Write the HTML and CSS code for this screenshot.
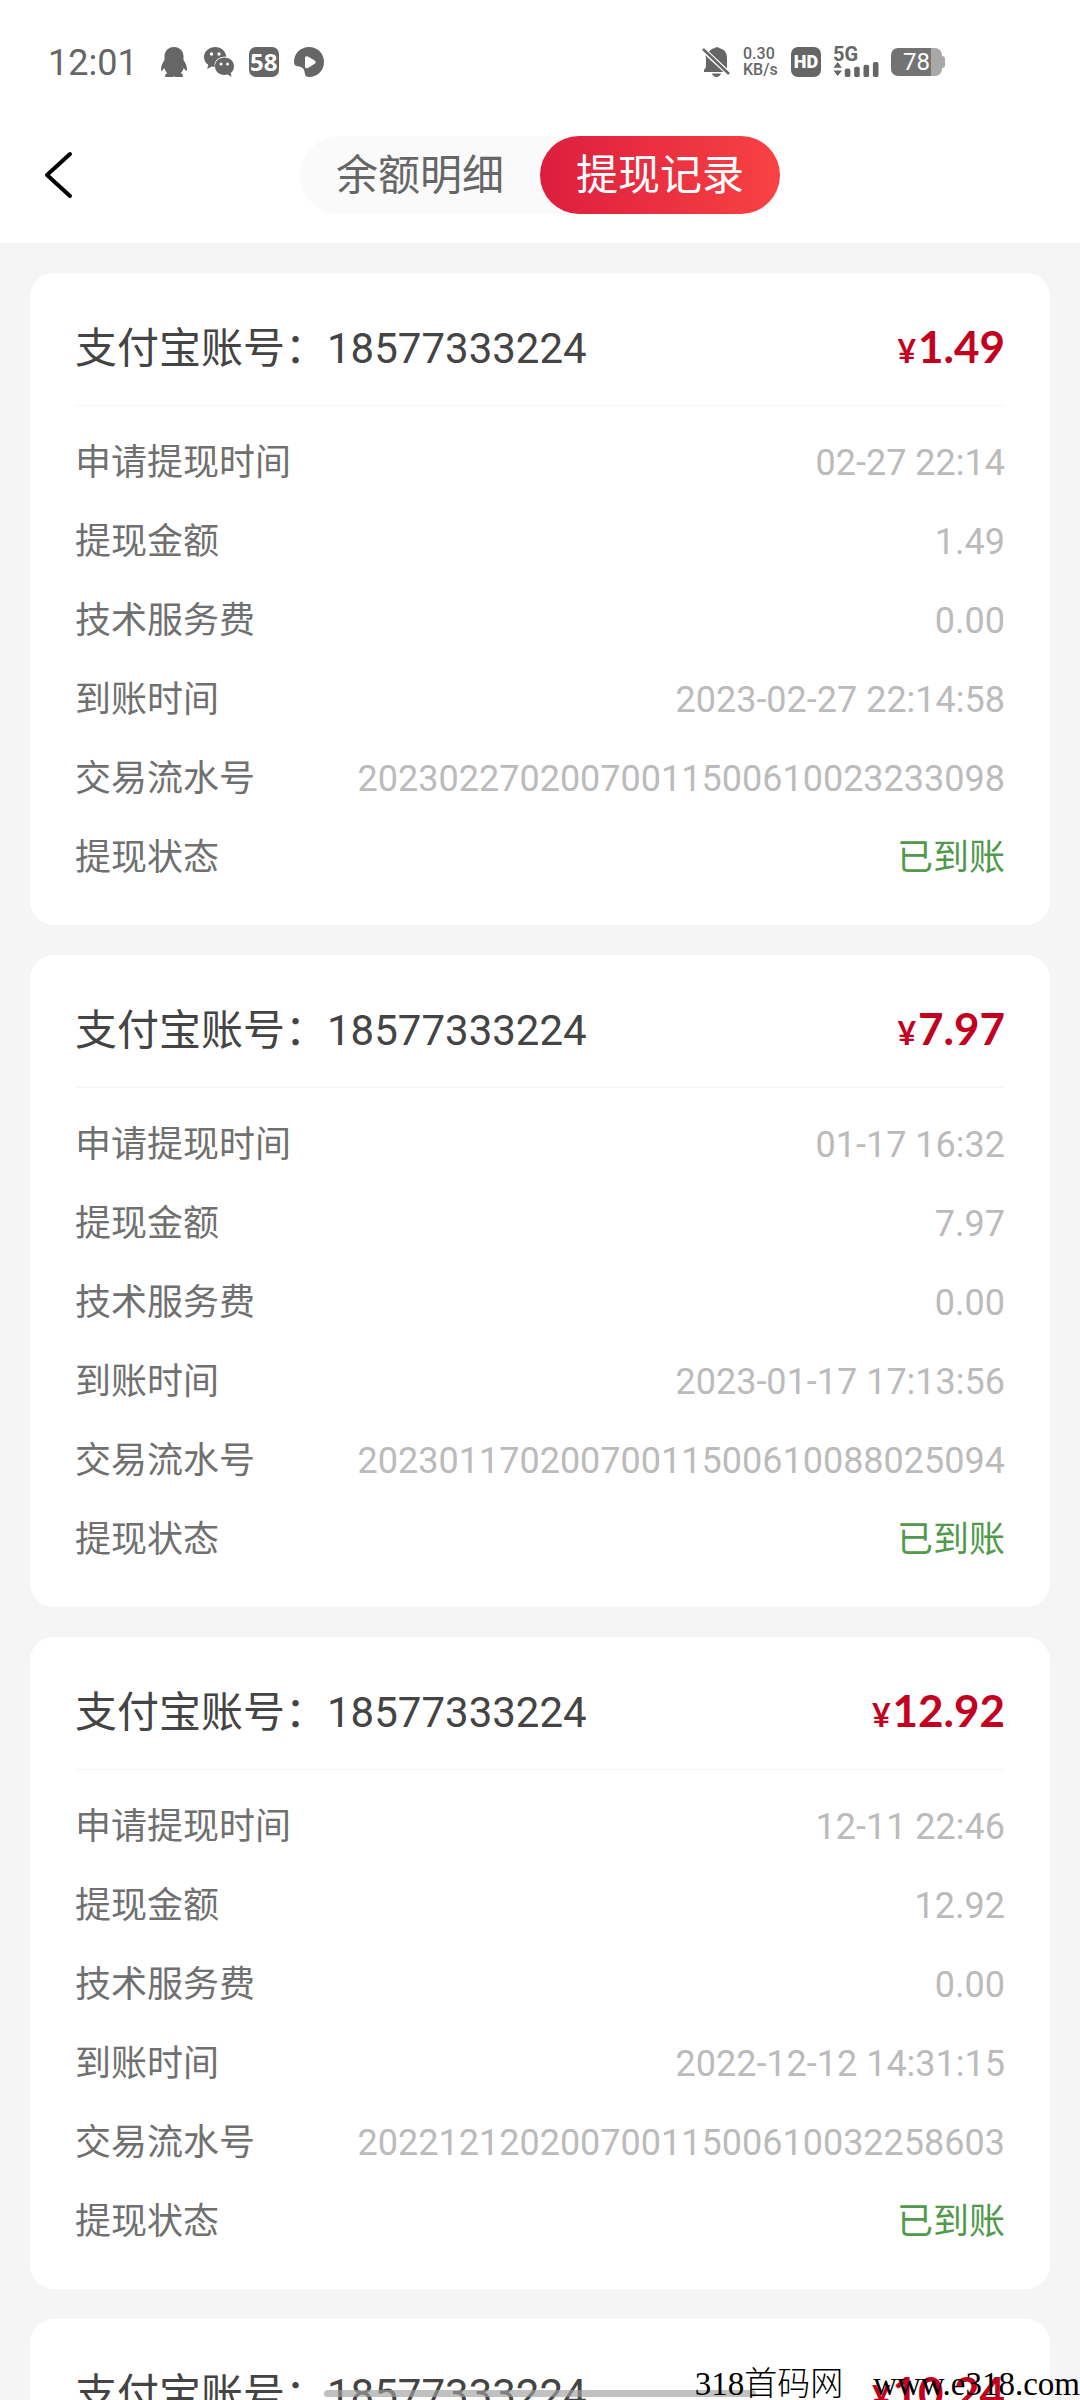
FILE: index.html
```html
<!DOCTYPE html>
<html lang="zh-CN">
<head>
  <meta charset="UTF-8">
  <meta name="viewport" content="width=device-width, initial-scale=1.0">
  <title>提现记录</title>
  <link rel="stylesheet" href="styles.css">
</head>
<body>
  <div class="status-bar">
    <div class="status-left">
      <span class="time">12:01</span>
      <svg class="icon" viewBox="0 0 30 30" aria-hidden="true">
        <path d="M15 0C9 0 5.500 4.300 5.500 9.500V13C3.500 16 1.800 19.500 2 23c.1 1.400 1 1.200 3.300-2 .5 2.200 1.500 3.800 3 5C6.500 26.800 5.800 28 6.300 30H14l1-.8 1 .8h7.700c.5-2-.2-3.200-2-4 1.500-1.200 2.500-2.800 3-5 2.300 3.200 3.200 3.400 3.300 2 .2-3.500-1.500-7-3.500-10V9.500C24.500 4.300 21 0 15 0z"/>
      </svg>
      <svg class="icon" viewBox="0 0 30 30" aria-hidden="true">
        <path d="M11.500 0C5 0 0 4.500 0 10c0 3.200 1.500 6 4.200 7.800L3.200 22l4.600-2.400c1 .3 2 .4 3 .4C9.500 13.500 14.500 9.300 22.400 9.400 21.500 4 17 0 11.500 0z"/>
        <path d="M20.500 10.500c-5.500 0-9.500 3.900-9.500 8.700s4 8.800 9.500 8.800c1.200 0 2.300-.2 3.300-.5L27.500 30l-.8-3.900C28.800 24.400 30 22 30 19.200c0-4.800-4-8.700-9.500-8.700z"/>
        <g fill="#fff">
          <circle cx="7.500" cy="7" r="1.700"/><circle cx="15" cy="7" r="1.700"/>
          <circle cx="17" cy="17" r="1.500"/><circle cx="23.500" cy="17" r="1.500"/>
        </g>
      </svg>
      <span class="badge">58</span>
      <svg class="icon" viewBox="0 0 30 30" aria-hidden="true">
        <path fill-rule="evenodd" d="M15 0C23.500 0 30 6.500 30 15S23.500 30 15 30c-3 0-4-1.500-4.300-4.500-.3-3.500-2-5.500-5.500-6C1.500 19 0 18 0 15 0 6.500 6.500 0 15 0zM11 11v8.500c0 1.600 1.500 2.300 2.900 1.500l6.800-4.200c1.300-.9 1.300-2.300 0-3.200L13.900 9.500C12.500 8.700 11 9.400 11 11z"/>
      </svg>
    </div>
    <div class="status-right">
      <svg class="icon" viewBox="0 0 30 30" aria-hidden="true">
        <path d="M4 8 22.500 25H3v-2l2-3v-8c0-1.500-.3-2.700-1-4zM8 4.500C9.500 2.500 11.500 1.500 13.500 1.300 14 0 18 0 18.500 1.300 23.500 2.300 26 6 26 11v10.500zM11 26.500h9c-.8 4.500-8.200 4.500-9 0z"/>
        <path d="M2 2l26 25" fill="none" stroke="#666" stroke-width="2.500"/>
      </svg>
      <div class="speed">
        <span>0.30</span>
        <span>KB/s</span>
      </div>
      <span class="badge badge-hd">HD</span>
      <div class="signal">
        <span class="network">5G</span>
        <svg class="bars" viewBox="0 0 48 16" aria-hidden="true">
          <path d="M0 6 4.500 0 9 6zM0 9h9l-4.500 6z"/>
          <rect x="12" y="7" width="6" height="9" rx="2"/>
          <rect x="22" y="5" width="6" height="11" rx="2"/>
          <rect x="32" y="3" width="6" height="13" rx="2"/>
          <rect x="42" y="0" width="6" height="16" rx="2"/>
        </svg>
      </div>
      <div class="battery"><span>78</span></div>
    </div>
  </div>

  <header class="header">
    <button class="back" type="button" aria-label="返回">
      <svg viewBox="0 0 30 48" aria-hidden="true"><path d="M27 3 4 24l23 21"/></svg>
    </button>
    <nav class="tabs">
      <button class="tab" type="button">余额明细</button>
      <button class="tab active" type="button">提现记录</button>
    </nav>
  </header>

  <main class="list">
    <section class="card">
      <div class="card-head">
        <h2>支付宝账号：18577333224</h2>
        <p class="amount"><span>¥</span>1.49</p>
      </div>
      <dl class="rows">
        <div class="row"><dt>申请提现时间</dt><dd>02-27 22:14</dd></div>
        <div class="row"><dt>提现金额</dt><dd>1.49</dd></div>
        <div class="row"><dt>技术服务费</dt><dd>0.00</dd></div>
        <div class="row"><dt>到账时间</dt><dd>2023-02-27 22:14:58</dd></div>
        <div class="row"><dt>交易流水号</dt><dd>20230227020070011500610023233098</dd></div>
        <div class="row"><dt>提现状态</dt><dd class="done">已到账</dd></div>
      </dl>
    </section>

    <section class="card">
      <div class="card-head">
        <h2>支付宝账号：18577333224</h2>
        <p class="amount"><span>¥</span>7.97</p>
      </div>
      <dl class="rows">
        <div class="row"><dt>申请提现时间</dt><dd>01-17 16:32</dd></div>
        <div class="row"><dt>提现金额</dt><dd>7.97</dd></div>
        <div class="row"><dt>技术服务费</dt><dd>0.00</dd></div>
        <div class="row"><dt>到账时间</dt><dd>2023-01-17 17:13:56</dd></div>
        <div class="row"><dt>交易流水号</dt><dd>20230117020070011500610088025094</dd></div>
        <div class="row"><dt>提现状态</dt><dd class="done">已到账</dd></div>
      </dl>
    </section>

    <section class="card">
      <div class="card-head">
        <h2>支付宝账号：18577333224</h2>
        <p class="amount"><span>¥</span>12.92</p>
      </div>
      <dl class="rows">
        <div class="row"><dt>申请提现时间</dt><dd>12-11 22:46</dd></div>
        <div class="row"><dt>提现金额</dt><dd>12.92</dd></div>
        <div class="row"><dt>技术服务费</dt><dd>0.00</dd></div>
        <div class="row"><dt>到账时间</dt><dd>2022-12-12 14:31:15</dd></div>
        <div class="row"><dt>交易流水号</dt><dd>20221212020070011500610032258603</dd></div>
        <div class="row"><dt>提现状态</dt><dd class="done">已到账</dd></div>
      </dl>
    </section>

    <section class="card">
      <div class="card-head">
        <h2>支付宝账号：18577333224</h2>
        <p class="amount"><span>¥</span>10.24</p>
      </div>
    </section>
  </main>

  <div class="home-bar"></div>
  <div class="watermark"><span>318首码网</span><span>www.e318.com</span></div>
</body>
</html>
```
FILE: styles.css
```css
* {
  box-sizing: border-box;
}

body {
  margin: 0;
  height: 100vh;
  overflow: hidden;
  display: flex;
  flex-direction: column;
  position: relative;
  background-color: #f5f5f5;
  font-family: Roboto, "Noto Sans CJK SC", sans-serif;
}

button {
  border: 0;
  padding: 0;
  background: none;
  font-family: inherit;
}

h2, p, dl, dd {
  margin: 0;
}

/* status bar */
.status-bar {
  display: flex;
  justify-content: space-between;
  flex-shrink: 0;
  padding: 44px 138px 0 48px;
  height: 108px;
  background-color: #fff;
  color: #666;
}

.status-left,
.status-right {
  display: flex;
  align-items: center;
  height: 36px;
  gap: 15px;
}

.time {
  margin-right: 6px;
  font-size: 36px;
  line-height: 36px;
  padding-top: 2px;
}

.icon {
  width: 30px;
  height: 30px;
  fill: #666;
}

.badge {
  width: 30px;
  height: 30px;
  border-radius: 7px;
  background-color: #666;
  color: #fff;
  font: bold 24px/30px "Open Sans", sans-serif;
  text-align: center;
}

.badge-hd {
  font: 900 18px/30px Roboto, sans-serif;
}

.status-right {
  gap: 12px;
}

.speed {
  display: flex;
  flex-direction: column;
  width: 36px;
  font-size: 16px;
  line-height: 16px;
  font-weight: 500;
}

.signal {
  display: flex;
  flex-direction: column;
  width: 46px;
  height: 30px;
}

.network {
  font-size: 20px;
  line-height: 15px;
  font-weight: 700;
}

.bars {
  width: 46px;
  height: 15px;
  fill: #666;
}

.battery {
  display: flex;
  align-items: center;
  position: relative;
  width: 51px;
  height: 28px;
  border-radius: 7px;
  background: linear-gradient(to right, #737373 78%, #a8a8a8 78%);
  color: #fff;
  font-size: 24px;
}

.battery span {
  flex: 1;
  text-align: center;
}

.battery::after {
  content: "";
  position: absolute;
  left: 100%;
  width: 3px;
  height: 12px;
  border-radius: 0 3px 3px 0;
  background-color: #a8a8a8;
}

/* header */
.header {
  display: grid;
  grid-template-columns: 1fr auto 1fr;
  align-items: center;
  flex-shrink: 0;
  height: 135px;
  padding: 0 43px 1px;
  background-color: #fff;
}

.back {
  width: 30px;
  height: 48px;
}

.back svg {
  display: block;
  width: 30px;
  height: 48px;
  fill: none;
  stroke: #000;
  stroke-width: 4;
  stroke-linecap: round;
  stroke-linejoin: round;
}

.tabs {
  display: flex;
  border-radius: 39px;
  background-color: #fafafa;
}

.tab {
  height: 78px;
  padding: 2px 36px 0;
  border-radius: 39px;
  color: #666;
  font-size: 42px;
  line-height: 76px;
}

.tab.active {
  background: linear-gradient(to right, #dc1e3e, #f84243);
  color: #fff;
}

/* records */
.list {
  display: flex;
  flex-direction: column;
  gap: 30px;
  padding: 30px 30px 0;
}

.card {
  flex-shrink: 0;
  padding: 0 45px;
  border-radius: 24px;
  background-color: #fff;
}

.card-head {
  display: flex;
  justify-content: space-between;
  align-items: baseline;
  height: 133px;
  padding-top: 44px;
  border-bottom: 1px solid #f5f5f5;
}

.card-head h2 {
  color: #444;
  font-size: 42px;
  font-weight: 400;
  line-height: 59px;
}

.amount {
  color: #c4001f;
  font: bold 44px/59px Lato, sans-serif;
}

.amount span {
  margin-right: 2px;
  font-size: 32px;
  line-height: 32px;
}

.rows {
  padding: 18px 0 27px;
}

.row {
  display: flex;
  justify-content: space-between;
  font-size: 36px;
  line-height: 79px;
}

.row dt {
  color: #707070;
}

.row dd {
  color: #bbb;
}

.row .done {
  color: #4f9a4b;
}

/* overlays */
.home-bar {
  position: absolute;
  left: 30%;
  right: 30%;
  bottom: 3px;
  height: 7px;
  border-radius: 4px;
  background-color: rgba(160, 160, 160, 0.65);
}

.watermark {
  position: absolute;
  right: 0;
  bottom: 0;
  display: flex;
  gap: 30px;
  color: #000;
  font-family: "Liberation Serif", "Noto Sans CJK SC", serif;
  font-size: 33px;
  line-height: 32px;
  font-weight: 300;
}
```
